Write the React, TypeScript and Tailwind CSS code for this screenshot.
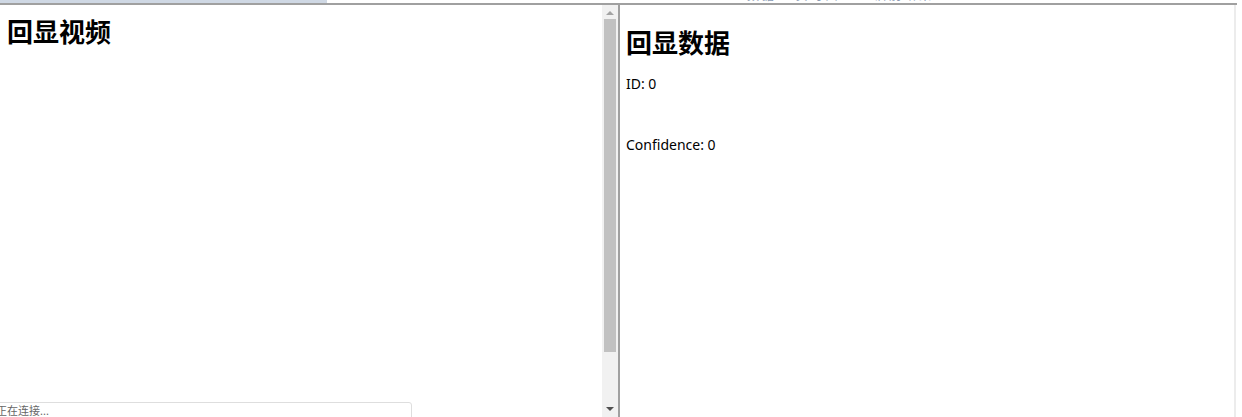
export default function App() {
  return (
    <div
      className="w-[1242px] h-[417px] overflow-hidden bg-white flex flex-col"
      style={{ fontFamily: '"Noto Sans", "Noto Sans CJK SC", sans-serif' }}
    >
      {/* top strip, mostly cut off */}
      <div className="h-[3px] flex overflow-hidden shrink-0">
        <div className="w-[327px] bg-[#cfd8e4]" />
        <div className="ml-[420px] -mt-[11px] text-[12px] leading-[14px] text-[#8a9bb4] tracking-[3px] whitespace-nowrap">
          数据 · 实时回显 · 识别结果
        </div>
      </div>
      <div className="h-[2px] w-[1237px] bg-[#a0a0a0] shrink-0" />

      <div className="flex flex-1 min-h-0">
        {/* left panel */}
        <div className="w-[602px] flex flex-col overflow-hidden">
          <h1
            className="mt-[10px] ml-[7px] text-[26px] leading-[31px] font-bold text-black"
            style={{ fontFamily: '"Noto Sans CJK SC", sans-serif' }}
          >
            回显视频
          </h1>
          <div className="mt-auto -ml-[7px] w-[419px] h-[20px] border border-[#dedede] rounded-[3px] text-[11px] leading-[15px] text-[#666] pl-[2px] -mb-[5px] shrink-0">
            正在连接...
          </div>
        </div>

        {/* scrollbar */}
        <div className="w-[16px] bg-[#f1f1f1] flex flex-col items-center">
          <div className="h-[14px] flex items-center justify-center">
            <svg width="8" height="5" viewBox="0 0 8 5">
              <path d="M0 5 L4 1 L8 5 Z" fill="#a3a3a3" />
            </svg>
          </div>
          <div className="w-[12px] h-[333px] bg-[#c1c1c1]" />
          <div className="mt-auto h-[16px] flex items-center justify-center">
            <svg width="8" height="5" viewBox="0 0 8 5">
              <path d="M0 0 L8 0 L4 4 Z" fill="#505050" />
            </svg>
          </div>
        </div>

        {/* divider */}
        <div className="w-[2px] bg-[#a0a0a0]" />

        {/* right panel */}
        <div className="w-[616px] border-r-2 border-[#ececec] pl-[6px]">
          <h2
            className="mt-[21px] text-[26px] leading-[31px] font-bold text-black"
            style={{ fontFamily: '"Noto Sans CJK SC", sans-serif' }}
          >
            回显数据
          </h2>
          <p className="mt-[16px] text-[14px] leading-[21px] text-black">ID: 0</p>
          <p className="mt-[40px] text-[14px] leading-[21px] text-black">Confidence: 0</p>
        </div>
      </div>
    </div>
  );
}
